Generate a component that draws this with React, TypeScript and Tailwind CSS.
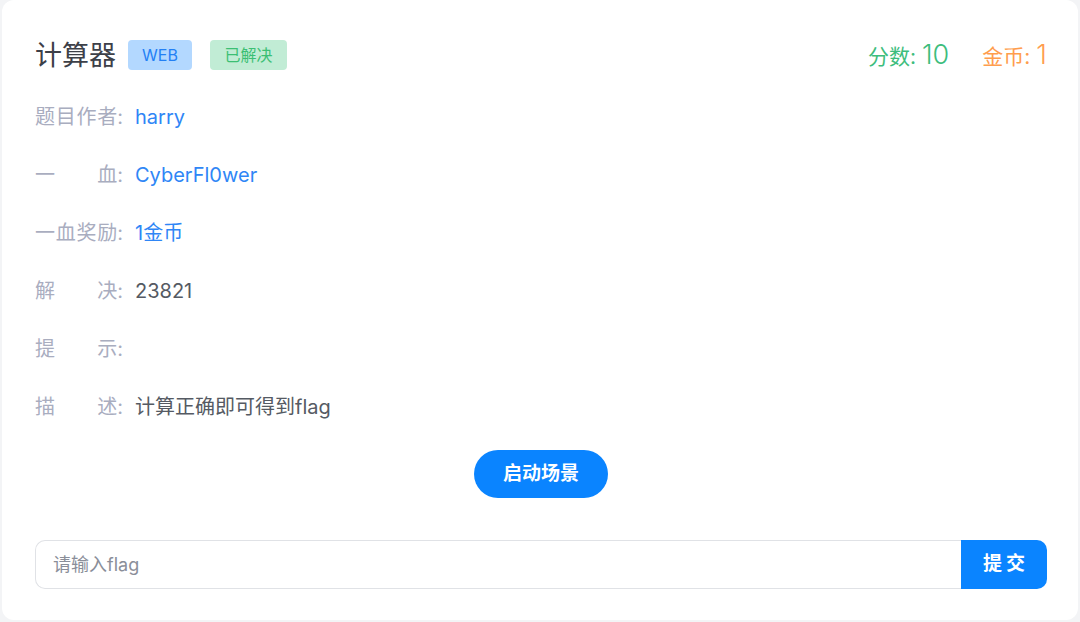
import React from 'react'

const rows: { label: string[]; value: string; color: string }[] = [
  { label: ['题', '目', '作', '者'], value: 'harry', color: 'text-[#2f86f6]' },
  { label: ['一', '血'], value: 'CyberFl0wer', color: 'text-[#2f86f6]' },
  { label: ['一', '血', '奖', '励'], value: '1金币', color: 'text-[#2f86f6]' },
  { label: ['解', '决'], value: '23821', color: 'text-[#555a63]' },
  { label: ['提', '示'], value: '', color: 'text-[#555a63]' },
  { label: ['描', '述'], value: '计算正确即可得到flag', color: 'text-[#555a63]' },
]

export default function App() {
  return (
    <div
      className="w-[1080px] h-[622px] bg-[#f3f4f6] px-[2px] pb-[2px] overflow-hidden"
      style={{ fontFamily: 'Inter, "Noto Sans CJK SC", sans-serif' }}
    >
      <div className="h-[620px] bg-white rounded-[12px] pl-[33px] pr-[31px] pt-[38px]">
        <div className="flex items-center h-[34px]">
          <h1 className="text-[27px] text-[#3d4048] leading-none">计算器</h1>
          <span className="ml-[12px] w-[64px] h-[30px] rounded-[4px] bg-[#b3d8ff] text-[#2380f5] text-[16px] flex items-center justify-center">WEB</span>
          <span className="ml-[18px] w-[77px] h-[30px] rounded-[4px] bg-[#c1ecd5] text-[#3cbf74] text-[16px] flex items-center justify-center">已解决</span>
          <div className="ml-auto flex items-baseline">
            <span className="text-[21px] text-[#3dbd7d]">分数:</span>
            <span className="ml-[6px] text-[27px] text-[#3dbd7d] font-light">10</span>
            <span className="ml-[33px] text-[21px] text-[#ff9d4d]">金币:</span>
            <span className="ml-[6px] text-[27px] text-[#ff9d4d] font-light">1</span>
          </div>
        </div>

        <div className="mt-[16px] flex flex-col">
          {rows.map((r, i) => (
            <div key={i} className="flex items-center h-[58px] text-[20px]">
              <div className="w-[88px] flex justify-between text-[#a9adbf]">
                {r.label.map((c, j) => (
                  <span key={j}>{j === r.label.length - 1 ? c + ':' : c}</span>
                ))}
              </div>
              <span className={`ml-[12px] ${r.color}`}>{r.value}</span>
            </div>
          ))}
        </div>

        <div className="flex justify-center mt-[14px]">
          <button className="w-[134px] h-[48px] rounded-full bg-[#0a84ff] text-white text-[19px] font-bold">启动场景</button>
        </div>

        <div className="mt-[42px] flex h-[49px]">
          <input
            className="flex-1 border border-[#e0e2e6] border-r-0 rounded-l-[10px] pl-[17px] text-[18px] outline-none placeholder:text-[#8a8e99]"
            placeholder="请输入flag"
          />
          <button className="w-[86px] rounded-r-[10px] bg-[#0a84ff] text-white text-[19px] font-bold tracking-[4px] pl-[4px]">提交</button>
        </div>
      </div>
    </div>
  )
}
